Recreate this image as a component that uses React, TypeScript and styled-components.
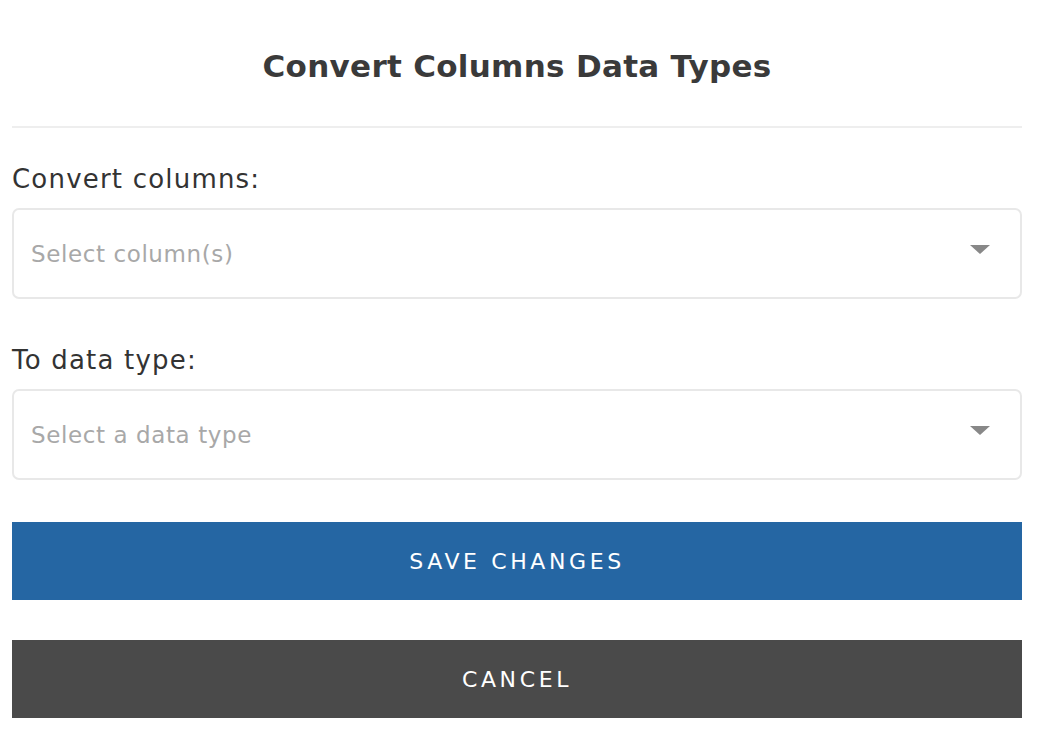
import * as React from 'react';
import styled, { createGlobalStyle } from 'styled-components';

const GlobalStyle = createGlobalStyle`
	body {
		margin: 0;
		background: #ffffff;
		font-family: 'DejaVu Sans', 'Liberation Sans', sans-serif;
		color: #3a3a3a;
	}
`;

const Modal = styled.div`
	padding: 0 18px 0 12px;
	display: flex;
	flex-direction: column;
`;

const Header = styled.div`
	height: 128px;
	box-sizing: border-box;
	padding-top: 6px;
	display: flex;
	align-items: center;
	justify-content: center;
	border-bottom: 2px solid #eeeeee;
`;

const Title = styled.h1`
	margin: 0;
	font-size: 31px;
	font-weight: 700;
	letter-spacing: 0.3px;
	color: #3a3a3a;
`;

const Field = styled.div`
	display: flex;
	flex-direction: column;
	margin-top: 36px;

	& + & {
		margin-top: 46px;
	}
`;

const Label = styled.label`
	font-size: 26px;
	line-height: 30px;
	letter-spacing: 1.2px;
	color: #333333;
	margin-bottom: 14px;
`;

const Select = styled.div`
	height: 91px;
	box-sizing: border-box;
	border: 2px solid #e8e8e8;
	border-radius: 7px;
	display: flex;
	align-items: center;
	justify-content: space-between;
	padding: 0 30px 0 17px;
`;

const Placeholder = styled.span`
	font-size: 23px;
	letter-spacing: 0.6px;
	color: #a8a8a8;
`;

const Caret = styled.span`
	width: 0;
	height: 0;
	border-left: 10px solid transparent;
	border-right: 10px solid transparent;
	border-top: 9px solid #888888;
	margin-top: -8px;
`;

const Actions = styled.div`
	display: flex;
	flex-direction: column;
	gap: 40px;
	margin-top: 42px;
`;

const Button = styled.button<{ $variant: 'primary' | 'secondary' }>`
	height: 78px;
	border: none;
	border-radius: 0;
	background: ${(p) => (p.$variant === 'primary' ? '#2566a3' : '#4a4a4a')};
	color: #ffffff;
	font-family: 'DejaVu Sans', 'Liberation Sans', sans-serif;
	font-size: 22px;
	letter-spacing: 3.6px;
	text-transform: uppercase;
	cursor: pointer;
`;

const App: React.FC = () => {
	return (
		<>
			<GlobalStyle />
			<Modal>
				<Header>
					<Title>Convert Columns Data Types</Title>
				</Header>
				<Field>
					<Label>Convert columns:</Label>
					<Select>
						<Placeholder>Select column(s)</Placeholder>
						<Caret />
					</Select>
				</Field>
				<Field>
					<Label>To data type:</Label>
					<Select>
						<Placeholder>Select a data type</Placeholder>
						<Caret />
					</Select>
				</Field>
				<Actions>
					<Button $variant='primary'>Save Changes</Button>
					<Button $variant='secondary'>Cancel</Button>
				</Actions>
			</Modal>
		</>
	);
};

export default App;
